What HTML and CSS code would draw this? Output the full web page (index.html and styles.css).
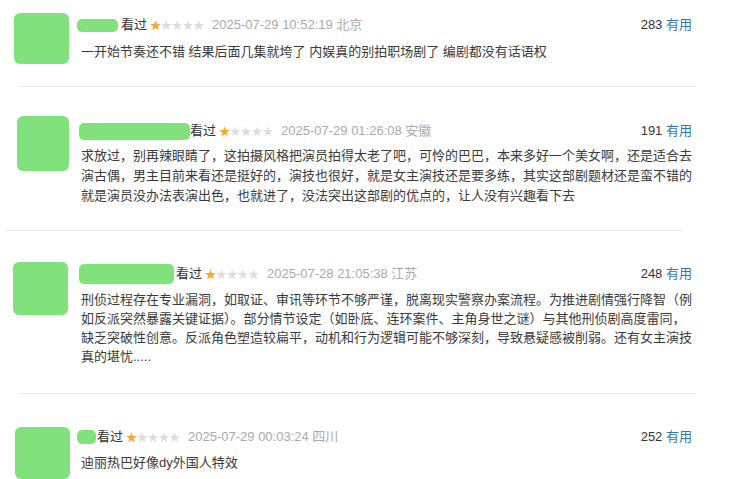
FILE: index.html
```html
<!DOCTYPE html>
<html lang="zh-CN">
<head>
<meta charset="utf-8">
<title>短评</title>
<link rel="stylesheet" href="styles.css">
</head>
<body>
<svg class="defs" width="0" height="0" aria-hidden="true">
  <defs>
    <polygon id="star" points="5.5,0.3 6.85,3.94 10.73,4.1 7.69,6.51 8.73,10.25 5.5,8.1 2.27,10.25 3.31,6.51 0.27,4.1 4.15,3.94"/>
  </defs>
</svg>

<div class="comment c1">
  <div class="avatar-col"><div class="avatar"></div></div>
  <div class="content">
    <div class="head">
      <span class="name"></span><span class="watched">看过</span>
      <svg class="stars" width="54" height="11" viewBox="0 0 54 11"><use href="#star" class="on"/><use href="#star" x="10.8" class="off"/><use href="#star" x="21.6" class="off"/><use href="#star" x="32.4" class="off"/><use href="#star" x="43.2" class="off"/></svg>
      <span class="time">2025-07-29 10:52:19 北京</span>
      <span class="votes"><span class="num">283</span> <span class="useful">有用</span></span>
    </div>
    <p class="text">一开始节奏还不错 结果后面几集就垮了 内娱真的别拍职场剧了 编剧都没有话语权</p>
  </div>
</div>
<div class="sep sep-a"></div>

<div class="comment c2">
  <div class="avatar-col"><div class="avatar"></div></div>
  <div class="content">
    <div class="head">
      <span class="name"></span><span class="watched">看过</span>
      <svg class="stars" width="54" height="11" viewBox="0 0 54 11"><use href="#star" class="on"/><use href="#star" x="10.8" class="off"/><use href="#star" x="21.6" class="off"/><use href="#star" x="32.4" class="off"/><use href="#star" x="43.2" class="off"/></svg>
      <span class="time">2025-07-29 01:26:08 安徽</span>
      <span class="votes"><span class="num">191</span> <span class="useful">有用</span></span>
    </div>
    <p class="text">求放过，别再辣眼睛了，这拍摄风格把演员拍得太老了吧，可怜的巴巴，本来多好一个美女啊，还是适合去演古偶，男主目前来看还是挺好的，演技也很好，就是女主演技还是要多练，其实这部剧题材还是蛮不错的就是演员没办法表演出色，也就进了，没法突出这部剧的优点的，让人没有兴趣看下去</p>
  </div>
</div>
<div class="sep sep-b"></div>

<div class="comment c3">
  <div class="avatar-col"><div class="avatar"></div></div>
  <div class="content">
    <div class="head">
      <span class="name"></span><span class="watched">看过</span>
      <svg class="stars" width="54" height="11" viewBox="0 0 54 11"><use href="#star" class="on"/><use href="#star" x="10.8" class="off"/><use href="#star" x="21.6" class="off"/><use href="#star" x="32.4" class="off"/><use href="#star" x="43.2" class="off"/></svg>
      <span class="time">2025-07-28 21:05:38 江苏</span>
      <span class="votes"><span class="num">248</span> <span class="useful">有用</span></span>
    </div>
    <p class="text">刑侦过程存在专业漏洞，如取证、审讯等环节不够严谨，脱离现实警察办案流程。为推进剧情强行降智（例如反派突然暴露关键证据）。部分情节设定（如卧底、连环案件、主角身世之谜）与其他刑侦剧高度雷同，缺乏突破性创意。反派角色塑造较扁平，动机和行为逻辑可能不够深刻，导致悬疑感被削弱。还有女主演技真的堪忧.....</p>
  </div>
</div>
<div class="sep sep-a"></div>

<div class="comment c4">
  <div class="avatar-col"><div class="avatar"></div></div>
  <div class="content">
    <div class="head">
      <span class="name"></span><span class="watched">看过</span>
      <svg class="stars" width="54" height="11" viewBox="0 0 54 11"><use href="#star" class="on"/><use href="#star" x="10.8" class="off"/><use href="#star" x="21.6" class="off"/><use href="#star" x="32.4" class="off"/><use href="#star" x="43.2" class="off"/></svg>
      <span class="time">2025-07-29 00:03:24 四川</span>
      <span class="votes"><span class="num">252</span> <span class="useful">有用</span></span>
    </div>
    <p class="text">迪丽热巴好像dy外国人特效</p>
  </div>
</div>
</body>
</html>
```

FILE: styles.css
```css
html, body {
  margin: 0;
  padding: 0;
  background: #fff;
}
body {
  width: 749px;
  height: 479px;
  overflow: hidden;
  font-family: "Liberation Sans", "Noto Sans CJK SC", sans-serif;
  font-size: 13px;
  color: #333;
}
.defs {
  position: absolute;
  width: 0;
  height: 0;
}
.comment {
  display: flex;
  align-items: flex-start;
  padding-right: 57px;
}
.avatar-col {
  width: 81px;
  flex: none;
}
.avatar {
  background: #81e27d;
  border-radius: 6px;
}
.content {
  flex: 1;
  min-width: 0;
}
.head {
  display: flex;
  align-items: center;
  height: 20px;
  line-height: 20px;
  white-space: nowrap;
}
.name {
  display: inline-block;
  background: #81e27d;
  border-radius: 5px;
  filter: blur(0.7px);
  flex: none;
}
.watched {
  color: #333;
  margin-left: 3px;
}
.stars {
  margin-left: 3px;
  flex: none;
  display: block;
}
.stars .on { fill: #fda52c; }
.stars .off { fill: #dedede; }
.time {
  color: #aaa;
  margin-left: 8px;
}
.votes {
  margin-left: auto;
  color: #333;
}
.useful {
  color: #3377aa;
}
.text {
  margin: 0;
  line-height: 20px;
  color: #3a3a3a;
}
.sep {
  height: 1px;
  background: #ebebeb;
}
.sep-a { margin: 0 53px 0 18px; }
.sep-b { margin: 0 66px 0 5px; }

/* comment 1 */
.c1 { padding-top: 13px; padding-bottom: 22px; }
.c1 .avatar { margin-left: 14px; width: 55px; height: 51px; }
.c1 .content { padding-top: 2px; }
.c1 .name { width: 41px; height: 13px; margin-left: -4px; }
.c1 .text { margin-top: 7px; }

/* comment 2 */
.c2 { padding-top: 29px; padding-bottom: 24px; }
.c2 .avatar { margin-left: 17px; width: 52px; height: 55px; }
.c2 .content { padding-top: 5px; }
.c2 .name { width: 111px; height: 17px; margin-left: -2px; margin-right: -3px; }
.c2 .text { margin-top: 5px; }

/* comment 3 */
.c3 { padding-top: 31px; padding-bottom: 27px; }
.c3 .avatar { margin-left: 13px; width: 55px; height: 53px; }
.c3 .content { padding-top: 2px; }
.c3 .name { width: 95px; height: 20px; margin-left: -2px; margin-right: -1px; }
.c3 .text { margin-top: 6px; line-height: 19px; }

/* comment 4 */
.c4 { padding-top: 33px; }
.c4 .avatar { margin-left: 15px; width: 55px; height: 52px; }
.c4 .name { width: 19px; height: 14px; margin-left: -4px; margin-right: -2px; }
.c4 .text { margin-top: 6px; }
```
